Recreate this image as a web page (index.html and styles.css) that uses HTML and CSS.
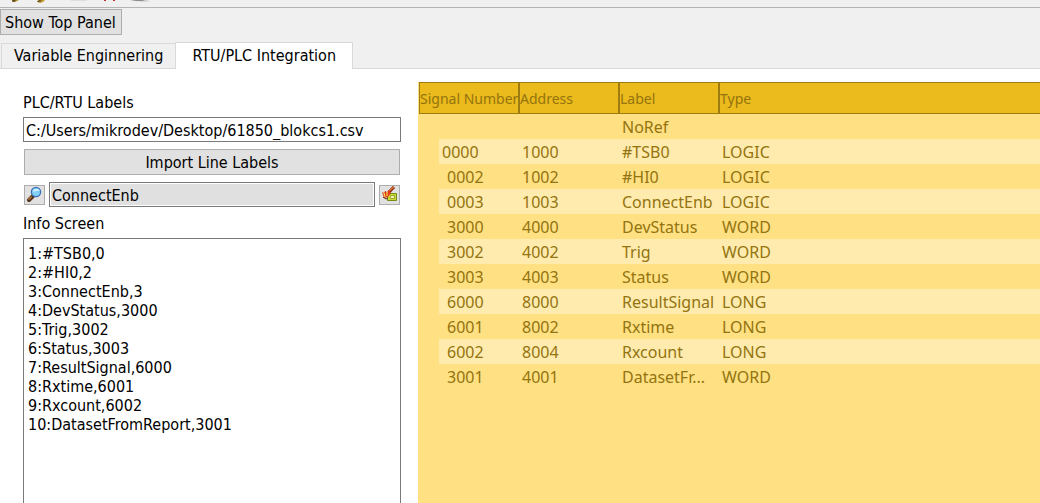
FILE: index.html
```html
<!DOCTYPE html>
<html lang="en">
<head>
<meta charset="utf-8">
<title>RTU/PLC Integration</title>
<link rel="stylesheet" href="styles.css">
</head>
<body>
<header class="toolbar">
  <svg class="toolbar-icons" width="160" height="7" viewBox="0 0 160 7" aria-hidden="true">
    <path d="M12 0h7l-4 2h-3z" fill="#b8912f"/><path d="M12 0l3-0 1 1-3 1z" fill="#5c4a22"/>
    <path d="M39 0h6l-2 2-3 1-3-1z" fill="#c49a32"/><path d="M37 1l3-1 2 1-4 1z" fill="#5c4a22"/>
    <path d="M71 0h16v1H71z" fill="#dedede"/>
    <path d="M104 0h2v1h-2zM113 0h2v1h-2z" fill="#c62a38"/>
    <path d="M130 0h12q3 1 9 1-13 1-21-1z" fill="#8e8e8e"/>
  </svg>
</header>
<button class="button top-button" type="button">Show Top Panel</button>
<nav class="tabs" role="tablist">
  <button class="tab" type="button" role="tab" aria-selected="false">Variable Enginnering</button>
  <button class="tab tab-active" type="button" role="tab" aria-selected="true">RTU/PLC Integration</button>
</nav>
<main class="pane">
  <section class="side">
    <label class="caption" for="path">PLC/RTU Labels</label>
    <input class="field" id="path" type="text" value="C:/Users/mikrodev/Desktop/61850_blokcs1.csv">
    <button class="button import" type="button">Import Line Labels</button>
    <div class="search">
      <button class="button icon-button" type="button" aria-label="Search">
        <svg width="17" height="17" viewBox="0 0 17 17">
          <path d="M3 14l4-4" stroke="#50321c" stroke-width="4" stroke-linecap="round"/>
          <path d="M3 13l2-2" stroke="#a46a38" stroke-width="2" stroke-linecap="round"/>
          <circle cx="10" cy="6" r="4.6" fill="#83d0f8" stroke="#3970b5" stroke-width="1.3"/>
          <path d="M7 6q0-3 4-3 2 0 3 2-3-1-7 1z" fill="#d8f3ff"/>
        </svg>
      </button>
      <input class="field search-field" type="text" value="ConnectEnb" aria-label="Search label">
      <button class="button icon-button" type="button" aria-label="Clear">
        <svg width="17" height="17" viewBox="0 0 17 17">
          <path d="M6.500 7.500h9v7h-9z" fill="#c9dc36" stroke="#758c16"/>
          <path d="M9.500 9.500h4v3h-4z" fill="#f4efb0" stroke="#9cab2e"/>
          <path d="M8 6l5-5" stroke="#7e1d12" stroke-width="3"/>
          <path d="M8 5l5-4" stroke="#ef7b2c" stroke-width="1.5"/>
          <path d="M1 6l2 1 1-2 2 1 2-2 2 3-3 4-4 1z" fill="#d9391c"/>
          <path d="M3 7l1 4M6 6l0 4" stroke="#ffd84c" stroke-width="1.2"/>
          <path d="M2 11l3 2 2-1" stroke="#5e2518" fill="none"/>
        </svg>
      </button>
    </div>
    <label class="caption" for="info">Info Screen</label>
    <textarea class="info" id="info" readonly>1:#TSB0,0
2:#HI0,2
3:ConnectEnb,3
4:DevStatus,3000
5:Trig,3002
6:Status,3003
7:ResultSignal,6000
8:Rxtime,6001
9:Rxcount,6002
10:DatasetFromReport,3001</textarea>
  </section>
  <section class="signals">
    <table class="grid">
      <colgroup><col class="col"><col class="col"><col class="col"><col></colgroup>
      <thead><tr><th>Signal Number</th><th>Address</th><th>Label</th><th>Type</th></tr></thead>
      <tbody>
        <tr><td></td><td></td><td>NoRef</td><td></td></tr>
        <tr class="first"><td>0000</td><td>1000</td><td>#TSB0</td><td>LOGIC</td></tr>
        <tr><td>0002</td><td>1002</td><td>#HI0</td><td>LOGIC</td></tr>
        <tr><td>0003</td><td>1003</td><td>ConnectEnb</td><td>LOGIC</td></tr>
        <tr><td>3000</td><td>4000</td><td>DevStatus</td><td>WORD</td></tr>
        <tr><td>3002</td><td>4002</td><td>Trig</td><td>WORD</td></tr>
        <tr><td>3003</td><td>4003</td><td>Status</td><td>WORD</td></tr>
        <tr><td>6000</td><td>8000</td><td>ResultSignal</td><td>LONG</td></tr>
        <tr><td>6001</td><td>8002</td><td>Rxtime</td><td>LONG</td></tr>
        <tr><td>6002</td><td>8004</td><td>Rxcount</td><td>LONG</td></tr>
        <tr><td>3001</td><td>4001</td><td>DatasetFr...</td><td>WORD</td></tr>
      </tbody>
    </table>
  </section>
</main>
</body>
</html>
```
FILE: styles.css
```css
* { box-sizing: border-box; }
body {
  margin: 0;
  height: 100vh;
  overflow: hidden;
  display: flex;
  flex-direction: column;
  background: #f0f0f0;
  color: #000;
  font: 16px/20px "DejaVu Sans Condensed", "Noto Sans", sans-serif;
}
button, input, textarea { font: inherit; color: inherit; margin: 0; border-radius: 0; outline: none; }
svg { display: block; fill: none; }
.toolbar { flex: none; height: 8px; border-bottom: 1px solid #b4b4b4; }
.button { background: #e1e1e1; border: 1px solid #adadad; padding: 2px 0 0; }
.top-button { flex: none; align-self: flex-start; height: 26px; margin-top: 1px; padding: 2px 5px 0 4px; white-space: nowrap; }
.tabs { flex: none; display: flex; align-items: flex-end; height: 34px; padding-left: 1px; border-bottom: 1px solid #d9d9d9; }
.tab { height: 25px; padding: 0 12px; border: 1px solid #d9d9d9; border-width: 1px 0 0 1px; background: #f0f0f0; white-space: nowrap; }
.tab-active { height: 27px; margin-bottom: -1px; padding: 0 16px; border-width: 1px 1px 0; background: #fff; }
.pane { flex: 1; min-height: 0; display: flex; gap: 17px; padding: 13px 0 0 23px; background: #fff; }
.side { flex: 0 0 378px; display: flex; flex-direction: column; padding-top: 11px; }
.caption { line-height: 20px; }
.field { width: 100%; height: 25px; margin-top: 4px; padding: 1px 2px 0; border: 1px solid #7a7a7a; background: #fff; }
.import { height: 26px; margin: 7px 1px; }
.search { display: flex; align-items: center; gap: 4px; padding: 0 1px; margin-bottom: 7px; }
.search-field { flex: 1; width: 0; margin: 0; background: #e0e0e0; box-shadow: inset 0 0 0 1px #fff; }
.icon-button { flex: none; width: 21px; height: 20px; padding: 0; display: grid; place-items: center; }
.info { flex: 1; margin-top: 4px; padding: 5px 4px; border: 1px solid #7a7a7a; border-bottom: 0; background: #fff; line-height: 19px; resize: none; overflow: hidden; }
.signals { flex: 1; min-width: 0; padding: 0 0 0 1px; background: #ffe082; color: #93740f; font-family: "Noto Sans", sans-serif; font-size: 16px; }
.grid { width: 100%; table-layout: fixed; border-collapse: separate; border-spacing: 0; }
.col { width: 100px; }
th { height: 32px; padding: 2px 0 0; text-align: left; font-size: 14px; font-weight: 400; white-space: nowrap; background: #ebba1c; border: 1px solid #9f7c10; }
th:last-child { border-right: 0; }
td { height: 25px; padding: 2px 4px 0 3px; line-height: 23px; white-space: nowrap; }
td:first-child { padding-left: 28px; }
.first td:first-child { padding-left: 23px; }
tbody tr:nth-child(even) td { background: #ffebae; }
tbody tr:nth-child(even) td:first-child { background: linear-gradient(to right, #ffe082 20px, #ffebae 20px); }
```
